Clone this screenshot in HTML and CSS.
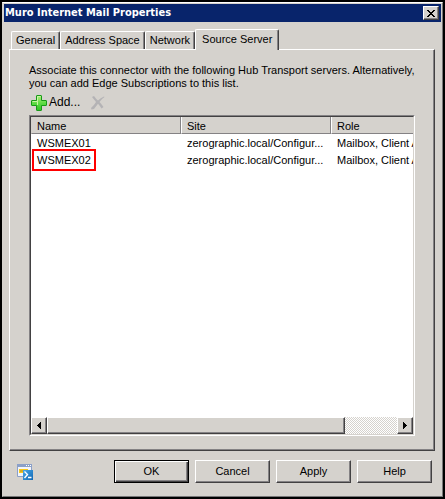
FILE: index.html
```html
<!DOCTYPE html>
<html lang="en">
<head>
<meta charset="utf-8">
<title>Muro Internet Mail Properties</title>
<link rel="stylesheet" href="styles.css">
</head>
<body>
<main class="dialog">
  <header class="titlebar">
    <h1>Muro Internet Mail Properties</h1>
    <button class="raised close" type="button" aria-label="Close">
      <svg width="8" height="7" viewBox="0 0 8 7" shape-rendering="crispEdges"><path d="M0 0h2v1h1v1h2V1h1V0h2v1H7v1H6v1H5v1h1v1h1v1h1v1H6V6H5V5H3v1H2v1H0V6h1V5h1V4h1V3H2V2H1V1H0z"/></svg>
    </button>
  </header>
  <div class="content">
    <div class="tabs" role="tablist">
      <button class="tab" type="button" role="tab">General</button>
      <button class="tab" type="button" role="tab">Address Space</button>
      <button class="tab" type="button" role="tab">Network</button>
      <button class="tab active" type="button" role="tab" aria-selected="true">Source Server</button>
    </div>
    <section class="panel" role="tabpanel">
      <p class="intro">Associate this connector with the following Hub Transport servers. Alternatively, you can add Edge Subscriptions to this list.</p>
      <div class="toolbar">
        <button class="tool" type="button">
          <svg width="16" height="16" viewBox="0 0 16 16">
            <defs><linearGradient id="green" x2="0" y2="1"><stop stop-color="#b4f07c"/><stop offset=".5" stop-color="#5fdc45"/><stop offset="1" stop-color="#2cc421"/></linearGradient></defs>
            <path d="M6 .5h4q.5 0 .5.5v4.500H15q.5 0 .5.5v4q0 .5-.5.5h-4.500V15q0 .5-.5.5H6q-.5 0-.5-.5v-4.500H1q-.5 0-.5-.5V6q0-.5.5-.5h4.500V1q0-.5.5-.5z" fill="url(#green)" stroke="#189a18"/>
            <path d="M6.500 10V6.500h-5M6.500 6.500v-5h3" fill="none" stroke="#c9f5a5"/>
          </svg>
          <span>Add...</span>
        </button>
        <button class="tool" type="button" aria-label="Remove" disabled>
          <svg width="14" height="14" viewBox="0 0 14 14" fill="#b4b3b5"><path d="M1 1l2-1q2 3 4 4.500Q9.500 2 13 .5l.5.5Q10.500 3 8.500 6q2 2 4 5l-2 1.500Q9 10 7 7.800 5 10.500 3 13L.5 13.500 0 12q3-2.500 5-6Q3 3.500 1 1z"/></svg>
        </button>
      </div>
      <div class="list">
        <div class="viewport">
          <table>
            <thead><tr><th scope="col">Name</th><th scope="col">Site</th><th scope="col">Role</th></tr></thead>
            <tbody>
              <tr><td>WSMEX01</td><td>zerographic.local/Configur...</td><td>Mailbox, Client A</td></tr>
              <tr><td><span class="marked">WSMEX02</span></td><td>zerographic.local/Configur...</td><td>Mailbox, Client A</td></tr>
            </tbody>
          </table>
        </div>
        <div class="scrollbar">
          <button class="raised arrow" type="button" aria-label="Scroll left"><svg width="4" height="7" viewBox="0 0 4 7" shape-rendering="crispEdges"><path d="M3 0h1v7H3V6H2V5H1V4H0V3h1V2h1V1h1z"/></svg></button>
          <div class="track"><div class="raised thumb"></div></div>
          <button class="raised arrow" type="button" aria-label="Scroll right"><svg width="4" height="7" viewBox="0 0 4 7" shape-rendering="crispEdges"><path d="M0 0h1v1h1v1h1v1h1v1H3v1H2v1H1v1H0z"/></svg></button>
        </div>
      </div>
    </section>
    <footer class="actions">
      <button class="shell" type="button" aria-label="Show command">
        <svg width="16" height="16" viewBox="0 0 16 16">
          <defs><linearGradient id="blue" x2="1" y2="1"><stop stop-color="#48a8e6"/><stop offset="1" stop-color="#1268b4"/></linearGradient></defs>
          <path d="M.5.5h14v12H.5z" fill="#f4f6fa" stroke="#8ba0c8"/>
          <path d="M0 0h15v3H0z" fill="#8ba0c8"/>
          <path d="M9 1h1v1H9zM11 1h1v1h-1zM13 1h1v1h-1z" fill="#fff"/>
          <path d="M2 5h9v4H2z" fill="#f8c81c"/><path d="M3 7h3" stroke="#b78c20"/>
          <path d="M6 6h10v10H6z" fill="url(#blue)"/>
          <path d="M7.500 7.500l3 3-3 3.500M11 13.500h3.500" fill="none" stroke="#fff" stroke-width="1.400"/>
        </svg>
      </button>
      <button class="raised push default" type="button">OK</button>
      <button class="raised push" type="button">Cancel</button>
      <button class="raised push" type="button">Apply</button>
      <button class="raised push" type="button">Help</button>
    </footer>
  </div>
</main>
</body>
</html>
```
FILE: styles.css
```css
* { box-sizing: border-box; }

body {
  display: flex;
  min-height: 100vh;
  margin: 0;
  padding: 2px;
  background: #000;
  color: #000;
  font: 11px/13px "Liberation Sans", sans-serif;
}

button {
  margin: 0;
  padding: 0;
  border: 0;
  border-radius: 0;
  background: #d5d2cd;
  color: inherit;
  font: inherit;
}

svg { display: block; }

.dialog {
  display: flex;
  flex: 1;
  flex-direction: column;
  min-width: 0;
  padding: 1px;
  background: #d5d2cd;
  border: 1px solid;
  border-color: #fff #777 #777 #d5d2cd;
}

.titlebar {
  display: flex;
  align-items: center;
  justify-content: space-between;
  height: 18px;
  padding: 0 2px 0 1px;
  background: #08246b;
  color: #fff;
}

.titlebar h1 {
  margin: 0;
  font: bold 11px/18px "DejaVu Sans Condensed", "DejaVu Sans", sans-serif;
}

.raised {
  display: flex;
  align-items: center;
  justify-content: center;
  background: #d5d2cd;
  border: 1px solid;
  border-color: #fff #424142 #424142 #fff;
  box-shadow: inset -1px -1px #848284;
}

.close { width: 16px; height: 14px; }

.content {
  display: flex;
  flex: 1;
  flex-direction: column;
  padding: 7px 6px 12px 5px;
}

.tabs {
  display: flex;
  align-items: flex-end;
  height: 20px;
  padding-left: 2px;
}

.tab {
  height: 18px;
  padding: 0 4px;
  border: 1px solid;
  border-color: #fff #424142 transparent #fff;
  border-bottom: 0;
  border-radius: 2px 2px 0 0;
  box-shadow: inset -1px 0 #848284;
}

.tab.active {
  position: relative;
  height: 21px;
  margin-bottom: -1px;
  padding: 0 6px 2px;
}

.panel {
  display: flex;
  flex: 1;
  flex-direction: column;
  padding: 14px 19px 14px 19px;
  border: 1px solid;
  border-color: #fff #424142 #424142 #fff;
  box-shadow: inset -1px -1px #848284;
}

.intro { margin: 0 -8px 0 0; }

.toolbar {
  display: flex;
  align-items: center;
  gap: 11px;
  height: 25px;
  padding-left: 2px;
}

.tool {
  display: flex;
  align-items: center;
  gap: 2px;
}

.tool span { font-size: 12px; }

.list {
  display: flex;
  flex: 1;
  flex-direction: column;
  border: 1px solid;
  border-color: #848284 #fff #fff #848284;
}

.viewport {
  flex: 1;
  overflow: hidden;
  background: #fff;
  border: solid;
  border-width: 1px 1px 0 1px;
  border-color: #424142 #d5d2cd #d5d2cd #424142;
}

table {
  width: 450px;
  table-layout: fixed;
  border-collapse: separate;
  border-spacing: 0;
}

th, td {
  height: 17px;
  padding: 2px 6px 0;
  text-align: left;
  white-space: nowrap;
  font-weight: normal;
}

th {
  padding: 2px 5px 0;
  background: #d5d2cd;
  border: solid;
  border-width: 0 1px 1px;
  border-color: #fff #848284 #848284 #fff;
}

th:first-child { border-left-color: #d5d2cd; }

.marked { position: relative; }

.marked::after {
  content: "";
  position: absolute;
  inset: -5px -5px;
  border: 2px solid #f00;
}

.scrollbar {
  display: flex;
  height: 18px;
  border: solid;
  border-width: 0 1px 1px 1px;
  border-color: #d5d2cd #d5d2cd #d5d2cd #424142;
}

.arrow { width: 16px; }

.track {
  display: flex;
  flex: 1;
  background: repeating-conic-gradient(#fff 0 25%, #d5d2cd 0 50%) 0 0 / 2px 2px;
}

.thumb { width: 85%; }

.actions {
  display: flex;
  align-items: center;
  gap: 6px;
  padding: 9px 3px 0 8px;
}

.shell { margin-right: auto; }

.push {
  width: 75px;
  height: 23px;
}

.default {
  border-color: #000;
  box-shadow: inset 1px 1px #fff, inset -1px -1px #424142, inset -2px -2px #848284;
}
```
